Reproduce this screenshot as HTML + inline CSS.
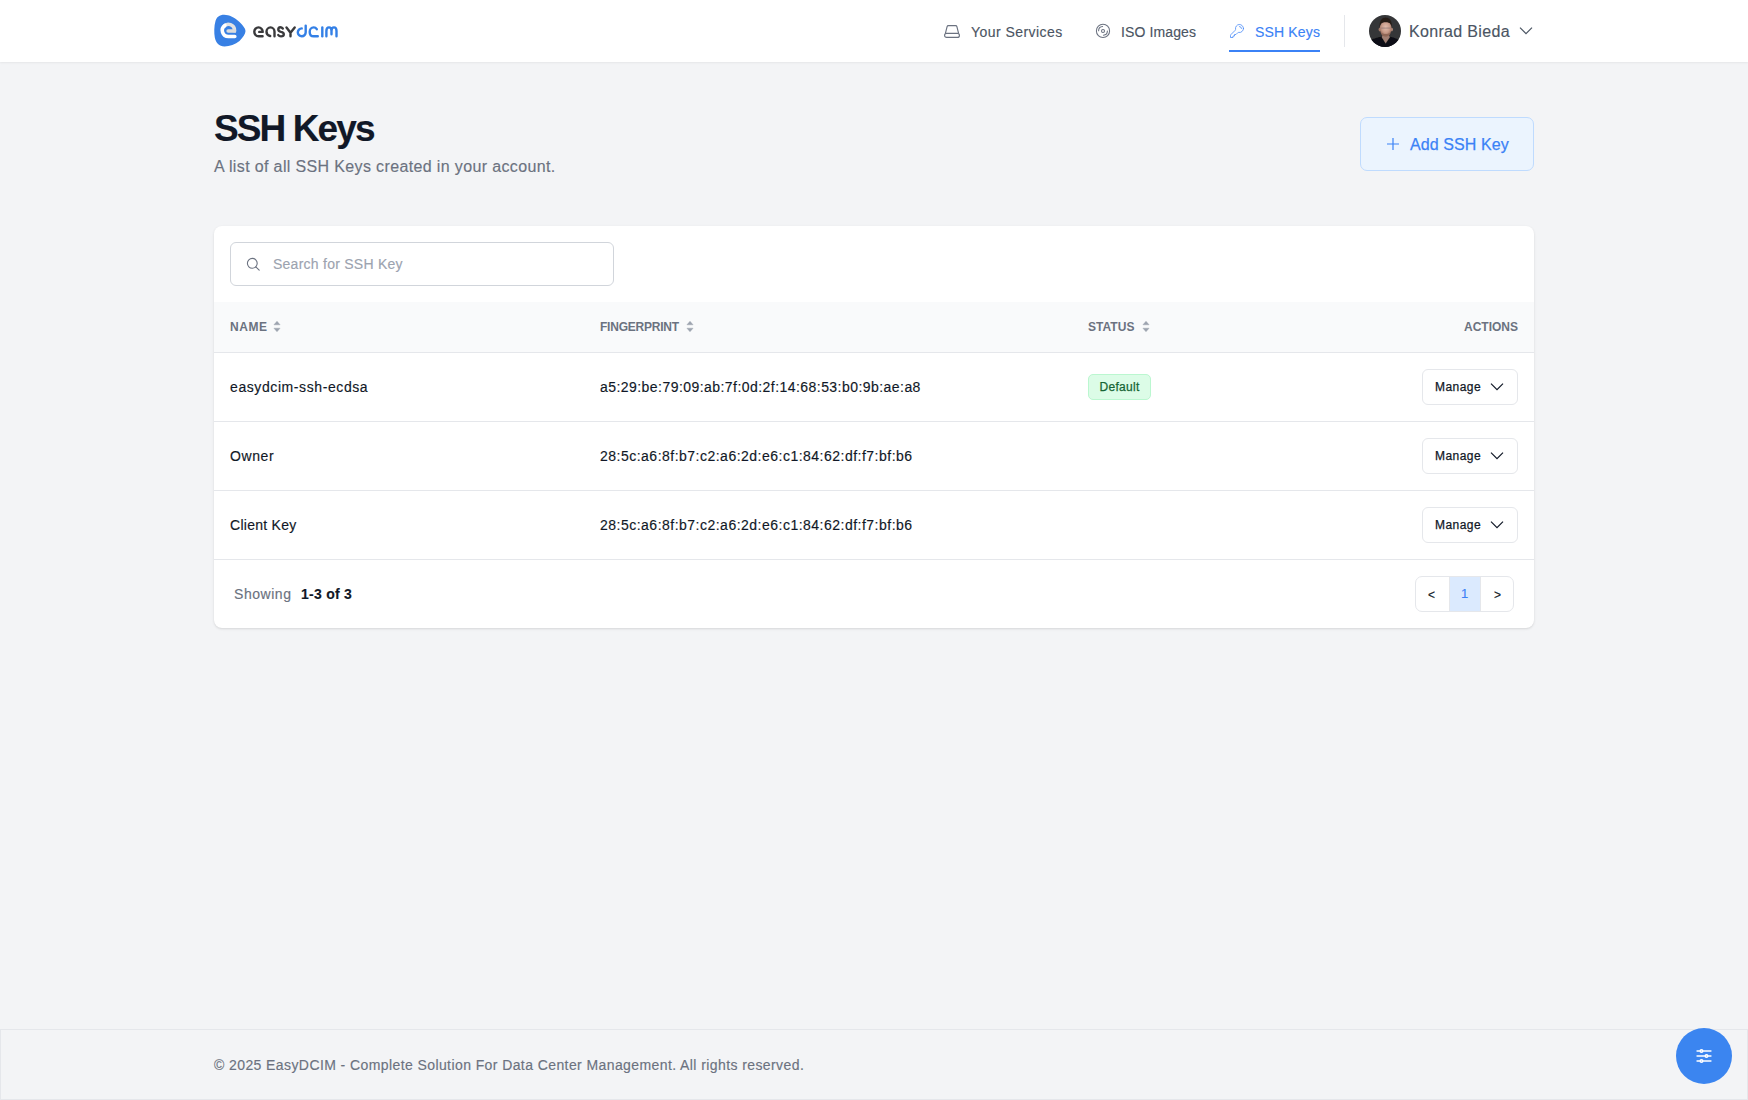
<!DOCTYPE html>
<html>
<head>
<meta charset="utf-8">
<style>
*{margin:0;padding:0;box-sizing:border-box}
html,body{width:1748px;height:1100px;overflow:hidden}
body{background:#f3f4f6;font-family:"Liberation Sans",sans-serif;position:relative;color:#111827}
.a{position:absolute;white-space:nowrap;-webkit-text-stroke:0.15px currentColor}
.t14{font-size:14px;line-height:14px}
.t12{font-size:12px;line-height:12px}
.t16{font-size:16px;line-height:16px}
#hdr{position:absolute;left:0;top:0;width:1748px;height:62px;background:#fff;box-shadow:0 1px 2px rgba(0,0,0,0.06)}
.nav{color:#4b5563}
.card{position:absolute;left:214px;top:226px;width:1320px;height:402px;background:#fff;border-radius:8px;box-shadow:0 1px 3px 0 rgba(0,0,0,0.1),0 1px 2px -1px rgba(0,0,0,0.1)}
.th{color:#6b7280;font-weight:bold;-webkit-text-stroke:0 !important}
.row{position:absolute;left:0;width:1320px;height:1px;background:#e5e7eb}
.med{-webkit-text-stroke:0.25px currentColor}
.mbtn{position:absolute;width:96px;height:36px;border:1px solid #e5e7eb;border-radius:6px;background:#fff}
#footer{position:absolute;left:0;top:1029px;width:1748px;height:71px;border:1px solid #e5e7eb;background:#f3f4f6}
</style>
</head>
<body>
<div id="hdr">
  <!-- logo -->
  <svg class="a" style="left:213px;top:14px" width="34" height="34" viewBox="0 0 34 34">
    <path d="M11.2 0.7 C16 0.7 22 3.5 26.5 8 C30 11.5 32.5 14.5 32.5 17.1 C32.5 20 30 23.5 26.5 27 C22.5 30.5 16.5 32.4 11.5 32.4 C6 32.4 3 29 1.8 23.5 C1 19 1 12 2.5 7 C3.5 3 6.5 0.7 11.2 0.7 Z" fill="#3880e4"/>
    <path d="M10.73 12.48 A6.1 6.1 0 0 1 21.5 16.4 L21.1 18.4" fill="none" stroke="#e2e2e2" stroke-width="3.6"/>
    <path d="M15.1 16.9 H21.5" fill="none" stroke="#dcdcdc" stroke-width="3.5" stroke-linecap="round"/>
    <path d="M11.9 11.4 A6.1 6.1 0 0 0 15.4 22.5 H21.8" fill="none" stroke="#fff" stroke-width="3.6" stroke-linecap="round"/>
  </svg>
  <svg class="a" style="left:252px;top:22px" width="88" height="18" viewBox="0 0 88 18">
    <g fill="none" stroke-width="2.4" stroke-linecap="round" stroke-linejoin="round">
      <g stroke="#3a3a3c">
        <path d="M7.25 9.9 H10.7 A4.2 4.45 0 1 0 6.5 14.3 H10.6"/>
        <path d="M22.5 14.3 V9.8 A4 4.4 0 0 0 14.5 9.8 C14.5 12 16 13.6 18.2 14"/>
        <path d="M30.8 6.6 C30 5.6 29 5.3 28.3 5.3 C26.8 5.3 26.3 6.5 26.3 7.6 C26.3 9 27.5 9.6 29 9.9 C30.8 10.2 31.8 11 31.8 12.3 C31.8 13.6 30.6 14.4 29 14.4 C27.6 14.4 26.8 13.8 26.3 13.1"/>
        <path d="M34.5 5.5 L38.5 10.8 L42.7 5.5 M38.5 10.8 V14.3"/>
      </g>
      <g stroke="#3480e6">
        <path d="M53.7 3.6 V10.3 A3.95 3.95 0 1 1 49.75 6.4"/>
        <path d="M64.8 7.2 C64 6 62.8 5.4 61.7 5.4 C59.3 5.4 57.7 7.4 57.7 9.9 C57.7 12.5 59.3 14.3 61.7 14.3 H65.8"/>
        <path d="M70.3 5.4 V14.3"/>
        <path d="M74.4 14.3 V9 C74.4 6.8 75.5 5.4 77 5.4 C78.5 5.4 79.5 6.8 79.5 9 V12.2 M79.5 9 C79.5 6.8 80.5 5.4 82 5.4 C83.5 5.4 84.5 6.8 84.5 9 V14.3"/>
      </g>
    </g>
  </svg>

  <!-- nav: Your Services -->
  <svg class="a" style="left:944px;top:25px" width="16" height="13" viewBox="0 0 16 13">
    <g fill="none" stroke="#6b7280" stroke-width="1.15" stroke-linejoin="round">
      <path d="M1.4 8.3 L3.1 1.6 Q3.35 0.6 4.4 0.6 H11.6 Q12.65 0.6 12.9 1.6 L14.6 8.3"/>
      <rect x="0.6" y="8.3" width="14.8" height="4.1" rx="2"/>
    </g>
  </svg>
  <div class="a t14 nav" style="left:971px;top:25px;letter-spacing:0.45px">Your Services</div>

  <!-- ISO -->
  <svg class="a" style="left:1095px;top:23px" width="16" height="16" viewBox="0 0 16 16">
    <g fill="none" stroke="#6b7280" stroke-width="1.05" stroke-linecap="round">
      <circle cx="8" cy="7.9" r="6.6"/>
      <circle cx="8" cy="7.9" r="1.5"/>
      <path d="M3.6 7.7 A4.3 4.3 0 0 1 7.6 3.5"/>
      <path d="M12.4 8.1 A4.3 4.3 0 0 1 8.4 12.3"/>
    </g>
  </svg>
  <div class="a t14 nav" style="left:1121px;top:25px;letter-spacing:0.12px">ISO Images</div>

  <!-- SSH Keys active -->
  <svg class="a" style="left:1229px;top:23px" width="16" height="16" viewBox="0 0 24 24">
    <path d="M15.75 5.25a3 3 0 0 1 3 3m3 0a6 6 0 0 1-7.029 5.912c-.563-.097-1.159.026-1.563.43L10.5 17.25H8.25v2.25H6v2.25H2.25v-2.818c0-.597.237-1.17.659-1.591l6.499-6.499c.404-.404.527-1 .43-1.563A6 6 0 1 1 21.75 8.25Z" fill="none" stroke="#4a8cf7" stroke-width="1.2" stroke-linecap="round" stroke-linejoin="round"/>
  </svg>
  <div class="a t14" style="left:1255px;top:25px;color:#3b82f6;letter-spacing:0.17px">SSH Keys</div>
  <div class="a" style="left:1229px;top:50px;width:91px;height:2px;background:#3b82f6"></div>

  <div class="a" style="left:1344px;top:15px;width:1px;height:32px;background:#e5e7eb"></div>

  <!-- avatar -->
  <svg class="a" style="left:1369px;top:15px" width="32" height="32" viewBox="0 0 32 32">
    <defs><clipPath id="av"><circle cx="16" cy="16" r="16"/></clipPath>
    <radialGradient id="fg" cx="0.5" cy="0.42" r="0.55"><stop offset="0" stop-color="#e2bcac"/><stop offset="0.6" stop-color="#c99c8a"/><stop offset="1" stop-color="#9a705f"/></radialGradient>
    <filter id="bl" x="-20%" y="-20%" width="140%" height="140%"><feGaussianBlur stdDeviation="0.6"/></filter></defs>
    <g clip-path="url(#av)">
      <rect width="32" height="32" fill="#353638"/>
      <g filter="url(#bl)">
      <path d="M-1 33 L0 26 C4 23.5 8.5 22.5 12.4 21.8 L16.6 29 L21.5 21.8 C25 22.5 29 24 32 26.5 L33 33 Z" fill="#111113"/>
      <path d="M13.8 19.5 L19.8 19.5 L20.8 22.3 L16.6 28.2 L12.8 22.3 Z" fill="#a07e72"/>
      <ellipse cx="10.6" cy="14.6" rx="1" ry="1.8" fill="#a27a6a"/>
      <ellipse cx="22.9" cy="14.6" rx="1" ry="1.8" fill="#b48c7c"/>
      <ellipse cx="16.7" cy="13.6" rx="5.9" ry="7.8" fill="url(#fg)"/>
      <path d="M11.6 17 C12.5 20.5 14.5 21.5 16.7 21.5 C19 21.5 21 20.5 21.8 17 C20.5 18.5 19 19 16.7 19 C14.4 19 13 18.5 11.6 17 Z" fill="#8f6656"/>
      <rect x="12" y="12.2" width="9.6" height="1.8" rx="0.9" fill="#7d6a6a" opacity="0.35"/>
      <path d="M10.6 13 C10.2 7 12.2 2.6 16.6 2.6 C21 2.6 23.3 6.5 22.9 13 C22.4 9.3 21.4 7.2 16.6 7.2 C12 7.2 11.1 9.3 10.6 13 Z" fill="#271c18"/>
      </g>
    </g>
  </svg>
  <div class="a t16 nav" style="left:1409px;top:24px;letter-spacing:0.33px">Konrad Bieda</div>
  <svg class="a" style="left:1519px;top:26px" width="14" height="10" viewBox="0 0 14 10">
    <path d="M1 1.6 L7 7.6 L13 1.6" fill="none" stroke="#4b5563" stroke-width="1.2"/>
  </svg>
</div>

<!-- title -->
<div class="a" style="left:214px;top:110px;font-size:37px;line-height:37px;font-weight:bold;color:#111827;letter-spacing:-1.9px">SSH Keys</div>
<div class="a t16" style="left:214px;top:159px;color:#6b7280;letter-spacing:0.36px">A list of all SSH Keys created in your account.</div>

<!-- add button -->
<div class="a" style="left:1360px;top:117px;width:174px;height:54px;background:#ebf4fe;border:1px solid #bfdbfe;border-radius:7px"></div>
<svg class="a" style="left:1386px;top:137px" width="14" height="14" viewBox="0 0 14 14">
  <path d="M7 1 V13 M1 7 H13" stroke="#3b82f6" stroke-width="1.2" fill="none"/>
</svg>
<div class="a t16 med" style="left:1410px;top:137px;color:#3b82f6;letter-spacing:0.1px">Add SSH Key</div>

<!-- card -->
<div class="card">
  <div class="a" style="left:16px;top:16px;width:384px;height:44px;border:1px solid #d1d5db;border-radius:6px;background:#fff"></div>
  <svg class="a" style="left:32px;top:31px" width="15" height="15" viewBox="0 0 15 15">
    <circle cx="6.3" cy="6.3" r="4.9" fill="none" stroke="#6b7280" stroke-width="1.1"/>
    <path d="M9.8 9.8 L13.2 13.2" stroke="#6b7280" stroke-width="1.1" stroke-linecap="round"/>
  </svg>
  <div class="a t14" style="left:59px;top:31px;color:#9ca3af;letter-spacing:0.25px">Search for SSH Key</div>

  <div class="a" style="left:0;top:76px;width:1320px;height:50px;background:#f9fafb"></div>
  <div class="row" style="top:126px"></div>
  <div class="a t12 th" style="left:16px;top:95px;letter-spacing:0.53px">NAME</div>
  <svg class="a" style="left:59px;top:94px" width="8" height="13" viewBox="0 0 8 13"><path d="M4 1.2 L7.1 4.8 H0.9 Z M4 11.8 L7.1 8.2 H0.9 Z" fill="#9ca3af" stroke="#9ca3af" stroke-width="0.4" stroke-linejoin="round"/></svg>
  <div class="a t12 th" style="left:386px;top:95px;letter-spacing:-0.22px">FINGERPRINT</div>
  <svg class="a" style="left:472px;top:94px" width="8" height="13" viewBox="0 0 8 13"><path d="M4 1.2 L7.1 4.8 H0.9 Z M4 11.8 L7.1 8.2 H0.9 Z" fill="#9ca3af" stroke="#9ca3af" stroke-width="0.4" stroke-linejoin="round"/></svg>
  <div class="a t12 th" style="left:874px;top:95px;letter-spacing:0.05px">STATUS</div>
  <svg class="a" style="left:928px;top:94px" width="8" height="13" viewBox="0 0 8 13"><path d="M4 1.2 L7.1 4.8 H0.9 Z M4 11.8 L7.1 8.2 H0.9 Z" fill="#9ca3af" stroke="#9ca3af" stroke-width="0.4" stroke-linejoin="round"/></svg>
  <div class="a t12 th" style="right:16px;top:95px;letter-spacing:0.0px">ACTIONS</div>
  <div class="a t14" style="left:16px;top:154px;letter-spacing:0.59px">easydcim-ssh-ecdsa</div>
  <div class="a t14" style="left:386px;top:154px;letter-spacing:0.45px">a5:29:be:79:09:ab:7f:0d:2f:14:68:53:b0:9b:ae:a8</div>
  <div class="a" style="left:874px;top:148px;width:63px;height:26px;background:#dcfce7;border:1px solid #bbf7d0;border-radius:5px"></div>
  <div class="a t12 med" style="left:885.5px;top:155px;color:#166534;letter-spacing:0.3px">Default</div>
  <div class="mbtn" style="left:1208px;top:143px"></div>
  <div class="a t12 med" style="left:1221px;top:155px;color:#111827;letter-spacing:0.45px">Manage</div>
  <svg class="a" style="left:1276px;top:156px" width="14" height="9" viewBox="0 0 14 9"><path d="M1 1.6 L7 7.6 L13 1.6" fill="none" stroke="#111827" stroke-width="1.2"/></svg>
  <div class="row" style="top:195px"></div>
  <div class="a t14" style="left:16px;top:223px;letter-spacing:0.6px">Owner</div>
  <div class="a t14" style="left:386px;top:223px;letter-spacing:0.49px">28:5c:a6:8f:b7:c2:a6:2d:e6:c1:84:62:df:f7:bf:b6</div>
  <div class="mbtn" style="left:1208px;top:212px"></div>
  <div class="a t12 med" style="left:1221px;top:224px;color:#111827;letter-spacing:0.45px">Manage</div>
  <svg class="a" style="left:1276px;top:225px" width="14" height="9" viewBox="0 0 14 9"><path d="M1 1.6 L7 7.6 L13 1.6" fill="none" stroke="#111827" stroke-width="1.2"/></svg>
  <div class="row" style="top:264px"></div>
  <div class="a t14" style="left:16px;top:292px;letter-spacing:0.27px">Client Key</div>
  <div class="a t14" style="left:386px;top:292px;letter-spacing:0.49px">28:5c:a6:8f:b7:c2:a6:2d:e6:c1:84:62:df:f7:bf:b6</div>
  <div class="mbtn" style="left:1208px;top:281px"></div>
  <div class="a t12 med" style="left:1221px;top:293px;color:#111827;letter-spacing:0.45px">Manage</div>
  <svg class="a" style="left:1276px;top:294px" width="14" height="9" viewBox="0 0 14 9"><path d="M1 1.6 L7 7.6 L13 1.6" fill="none" stroke="#111827" stroke-width="1.2"/></svg>
  <div class="row" style="top:333px"></div>
  <div class="a t14" style="left:20px;top:361px;color:#6b7280;letter-spacing:0.54px">Showing</div>
  <div class="a t14" style="left:87px;top:361px;color:#111827;font-weight:bold;letter-spacing:0.26px">1-3 of 3</div>
  <div class="a" style="left:1201px;top:350px;width:99px;height:36px;border:1px solid #e5e7eb;border-radius:7px;overflow:hidden;background:#fff"><div style="position:absolute;left:33px;top:0;width:32px;height:34px;background:#dbeafe;border-left:1px solid #e5e7eb;border-right:1px solid #e5e7eb"></div></div>
  <div class="a t12" style="left:1201px;width:33px;text-align:center;top:363px;color:#111827">&lt;</div>
  <div class="a" style="left:1234px;width:33px;text-align:center;top:361px;font-size:13px;line-height:13px;color:#3b82f6">1</div>
  <div class="a t12" style="left:1267px;width:33px;text-align:center;top:363px;color:#111827">&gt;</div>
</div>
<div id="footer"></div>
<div class="a t14" style="left:214px;top:1058px;color:#6b7280;letter-spacing:0.41px">&copy; 2025 EasyDCIM - Complete Solution For Data Center Management. All rights reserved.</div>
<div class="a" style="left:1676px;top:1028px;width:56px;height:56px;border-radius:50%;background:#3b85f0"></div>
<svg class="a" style="left:1694px;top:1046px" width="20" height="20" viewBox="0 0 24 24"><path d="M10.5 6h9.75M10.5 6a1.5 1.5 0 1 1-3 0m3 0a1.5 1.5 0 1 0-3 0M3.75 6H7.5m3 12h9.75m-9.75 0a1.5 1.5 0 0 1-3 0m3 0a1.5 1.5 0 0 0-3 0m-3.75 0H7.5m9-6h3.75m-3.75 0a1.5 1.5 0 0 1-3 0m3 0a1.5 1.5 0 0 0-3 0m-9.75 0h9.75" fill="none" stroke="#fff" stroke-width="2" stroke-linecap="round"/></svg>
</body>
</html>
